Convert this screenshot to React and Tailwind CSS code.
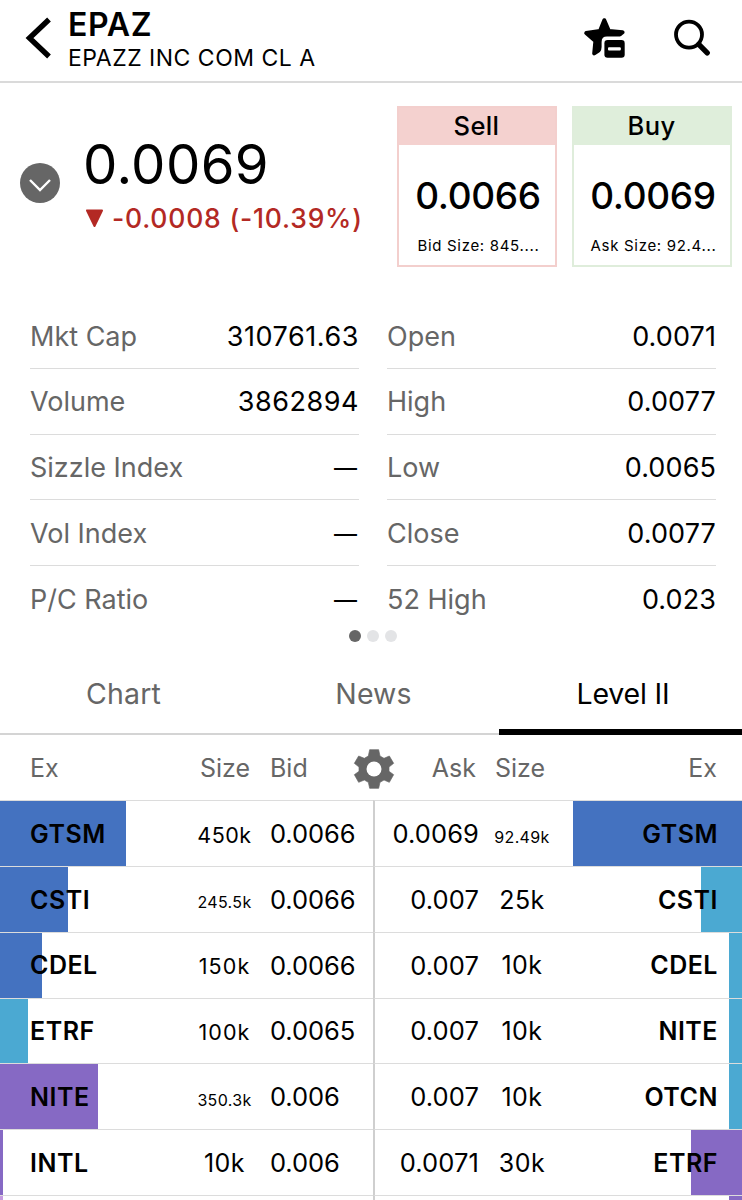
const stats = [
  ["Mkt Cap", "310761.63", "Open", "0.0071"],
  ["Volume", "3862894", "High", "0.0077"],
  ["Sizzle Index", "—", "Low", "0.0065"],
  ["Vol Index", "—", "Close", "0.0077"],
  ["P/C Ratio", "—", "52 High", "0.023"],
];

const BLUE = "bg-[#4472c0]";
const TEAL = "bg-[#4ba9d2]";
const PURPLE = "bg-[#8669c4]";

const bids = [
  { ex: "GTSM", size: "450k", price: "0.0066", bar: 125.5, color: BLUE },
  { ex: "CSTI", size: "245.5k", price: "0.0066", bar: 68.4, color: BLUE },
  { ex: "CDEL", size: "150k", price: "0.0066", bar: 42, color: BLUE },
  { ex: "ETRF", size: "100k", price: "0.0065", bar: 28, color: TEAL },
  { ex: "NITE", size: "350.3k", price: "0.006", bar: 98, color: PURPLE },
  { ex: "INTL", size: "10k", price: "0.006", bar: 3, color: PURPLE },
  { ex: "", size: "", price: "", bar: 3, color: "bg-[#c79be0]" },
];

const asks = [
  { ex: "GTSM", size: "92.49k", price: "0.0069", bar: 169, color: BLUE },
  { ex: "CSTI", size: "25k", price: "0.007", bar: 41, color: TEAL },
  { ex: "CDEL", size: "10k", price: "0.007", bar: 13, color: TEAL },
  { ex: "NITE", size: "10k", price: "0.007", bar: 13, color: TEAL },
  { ex: "OTCN", size: "10k", price: "0.007", bar: 13, color: TEAL },
  { ex: "ETRF", size: "30k", price: "0.0071", bar: 51, color: PURPLE },
  { ex: "", size: "", price: "", bar: 13, color: PURPLE },
];

function sizeClass(size) {
  if (size.length > 4) return "text-[16px] tracking-[0.35px] pt-[6px]";
  if (size.length === 4 && size[0] === "1") return "text-[21.5px] tracking-[1.1px] pt-[2px]";
  if (size.length === 4) return "text-[21.5px] tracking-[0.5px] pt-[2px]";
  return "text-[25px] tracking-[0.5px] pt-[2px]";
}

function Header() {
  return (
    <header className="flex h-[83px] shrink-0 border-b-2 border-[#dadada]">
      <svg className="ml-[24px] mt-[16px] h-[44px] w-[30px] shrink-0" viewBox="0 0 30 44" fill="none">
        <path d="M25 3.5 L5.5 22 L25 40.5" stroke="#000" strokeWidth="5.4" />
      </svg>
      <div className="ml-[14px] flex-1">
        <h1 className="mt-[6px] text-[32px] font-semibold leading-[38px] tracking-[0.7px]">EPAZ</h1>
        <p className="text-[23px] leading-[29px] tracking-[0.5px]">EPAZZ INC COM CL A</p>
      </div>
      <svg className="mt-[16px] h-[44px] w-[44px]" viewBox="0 0 44 44">
        <path
          d="M22.3 4.2 L26.8 14.9 L40.6 16.2 L31 24 L30 31 L22 31 L12.2 37.4 L13.4 25 L4.2 17 L18 14.9 Z"
          fill="#000"
          stroke="#000"
          strokeWidth="4"
          strokeLinejoin="round"
        />
        <path d="M17.8 44 V36.6 Q19.6 34 19.6 31 V26 Q19.6 20.6 25 20.6 H44 V44 Z" fill="#fff" />
        <rect x="22.4" y="24" width="20.3" height="17.8" rx="3.2" fill="#000" />
        <rect x="26" y="31.2" width="12.8" height="3.4" rx="1" fill="#fff" />
      </svg>
      <svg className="ml-[41px] mr-[31px] mt-[16px] h-[44px] w-[44px]" viewBox="0 0 44 44" fill="none" stroke="#000">
        <circle cx="22" cy="18.6" r="13" strokeWidth="3.8" />
        <path d="M31.8 28.4 L40.2 36.8" strokeWidth="5.4" strokeLinecap="round" />
      </svg>
    </header>
  );
}

function QuoteBox({ label, price, note, border, fill }) {
  return (
    <div className={`flex h-[161px] w-[160px] flex-col items-center border-2 ${border}`}>
      <div className={`h-[37px] w-full pr-[1px] text-center text-[25.5px] font-[450] leading-[35px] tracking-[0.4px] ${fill}`}>{label}</div>
      <div className="mt-[26px] pl-[2px] text-[37px] font-[450] leading-[50px] tracking-[-0.3px]">{price}</div>
      <div className="mt-[15px] pl-[3px] text-[15px] leading-[20px] tracking-[0.68px]">{note}</div>
    </div>
  );
}

function Quote() {
  return (
    <section className="flex h-[220px] shrink-0">
      <div className="ml-[20px] mt-[80px] flex size-[40px] items-center justify-center rounded-full bg-[#666]">
        <svg className="size-[40px]" viewBox="0 0 40 40" fill="none" stroke="#fff" strokeWidth="2.4">
          <path d="M10 17 L20 27 L30 17" />
        </svg>
      </div>
      <div className="ml-[24px] mt-[49px] w-[313px]">
        <div className="-ml-[1px] text-[54.5px] leading-[64px] tracking-[0.4px]">0.0069</div>
        <div className="mt-[8px] flex items-center whitespace-nowrap text-[26.5px] font-[450] leading-[28px] tracking-[0.8px] text-[#b32924]">
          <svg className="ml-[1px] mr-[8px] h-[20px] w-[19px]" viewBox="0 0 19 20" fill="currentColor" stroke="currentColor">
            <path d="M2 2.5 H17 L9.5 18 Z" strokeWidth="2" strokeLinejoin="round" />
          </svg>
          -0.0008 (-10.39%)
        </div>
      </div>
      <div className="mt-[23px] flex gap-[15px]">
        <QuoteBox label="Sell" price="0.0066" note="Bid Size: 845...." border="border-[#f3cfcd]" fill="bg-[#f4d1cf]" />
        <QuoteBox label="Buy" price="0.0069" note="Ask Size: 92.4..." border="border-[#dfeddb]" fill="bg-[#dfeedb]" />
      </div>
    </section>
  );
}

function Stat({ label, value, last }) {
  return (
    <div className={`flex h-[65.75px] w-[329px] items-center justify-between text-[27px] ${last ? "pt-[2px]" : "border-b border-[#dcdcdc] pt-[3px]"}`}>
      <span className="text-[#666]">{label}</span>
      {value === "—" ? (
        <span className="pr-[2px] text-[23px]">—</span>
      ) : (
        <span className={value.includes("0.0") ? "tracking-[0.1px]" : "tracking-[0.55px]"}>{value}</span>
      )}
    </div>
  );
}

function Tabs() {
  return (
    <nav className="mt-[11px] flex h-[82px] shrink-0 text-[28.5px] text-[#666]">
      <div className="w-[249px] border-b-2 border-[#d4d4d4] pr-[2px] text-center leading-[82px] tracking-[0.2px]">Chart</div>
      <div className="w-[250px] border-b-2 border-[#d4d4d4] pr-[1px] text-center leading-[82px] tracking-[0.1px]">News</div>
      <div className="flex-1 border-b-6 border-black pl-[5px] text-center leading-[82px] tracking-[-0.2px] text-black">Level II</div>
    </nav>
  );
}

function Gear() {
  return (
    <svg className="ml-[1px] mr-[3px] size-[42px] shrink-0" viewBox="38 38 126 126">
      <path
        d="M88 43 H115 L119 62 L131 69 L147 62 L160 84 L146 95 V108 L160 118 L147 141 L131 134 L119 141 L115 159 H88 L84 141 L72 134 L55 141 L42 118 L56 108 V95 L42 84 L55 62 L72 69 L84 62 Z"
        fill="#666"
        stroke="#666"
        strokeWidth="2"
        strokeLinejoin="round"
      />
      <circle cx="101" cy="101" r="22.5" fill="#fff" />
    </svg>
  );
}

function BookHeader() {
  return (
    <div className="flex h-[65.5px] shrink-0 items-center pt-[2px] text-[25px] text-[#666]">
      <span className="w-[200px] pl-[30px] pt-[1px]">Ex</span>
      <span className="w-[70px] pt-[1px]">Size</span>
      <span className="w-[82px] pt-[1px]">Bid</span>
      <Gear />
      <span className="w-[78px] pt-[1px] text-right">Ask</span>
      <span className="w-[69px] pl-[19px] pt-[1px]">Size</span>
      <span className="flex-1 pr-[25px] pt-[1px] text-right">Ex</span>
    </div>
  );
}

function BidCell({ row }) {
  return (
    <div className="relative flex h-[65.75px] w-[373px] items-center border-t border-[#dcdcdc] text-[25.5px]">
      <div className={`absolute left-0 top-0 h-full ${row.color}`} style={{ width: row.bar }} />
      <span className="relative w-[184px] pl-[30px] pt-[2px] text-[25px] font-semibold tracking-[0.5px]">{row.ex}</span>
      <span className={`relative w-[81px] text-center ${sizeClass(row.size)}`}>{row.size}</span>
      <span className="relative pl-[5px] pt-[1px] tracking-[-0.1px]">{row.price}</span>
    </div>
  );
}

function AskCell({ row }) {
  return (
    <div className="relative flex h-[65.75px] w-[369px] items-center border-l-2 border-t border-l-[#cfcfcf] border-t-[#dcdcdc] text-[25.5px]">
      <div className={`absolute right-0 top-0 h-full ${row.color}`} style={{ width: row.bar }} />
      <span className="relative w-[104px] pt-[1px] text-right tracking-[0.1px]">{row.price}</span>
      <span className={`relative w-[86px] text-center ${sizeClass(row.size)}`}>{row.size}</span>
      <span className="relative flex-1 pr-[24px] pt-[2px] text-right text-[25px] font-semibold tracking-[0.5px]">{row.ex}</span>
    </div>
  );
}

export default function App() {
  return (
    <main className="flex h-[1200px] w-[742px] flex-col overflow-hidden bg-white font-['Inter',sans-serif] text-black">
      <Header />
      <Quote />
      <section className="shrink-0">
        {stats.map(([l1, v1, l2, v2], i) => (
          <div key={l1} className="flex gap-[28px] pl-[30px]">
            <Stat label={l1} value={v1} last={i === 4} />
            <Stat label={l2} value={v2} last={i === 4} />
          </div>
        ))}
      </section>
      <div className="-mt-[2px] flex shrink-0 justify-center gap-[6px] pl-[4px]">
        <span className="size-[12px] rounded-full bg-[#666]" />
        <span className="size-[12px] rounded-full bg-[#e3e4e6]" />
        <span className="size-[12px] rounded-full bg-[#e3e4e6]" />
      </div>
      <Tabs />
      <BookHeader />
      <section className="shrink-0">
        {bids.map((bid, i) => (
          <div key={i} className="flex">
            <BidCell row={bid} />
            <AskCell row={asks[i]} />
          </div>
        ))}
      </section>
    </main>
  );
}
